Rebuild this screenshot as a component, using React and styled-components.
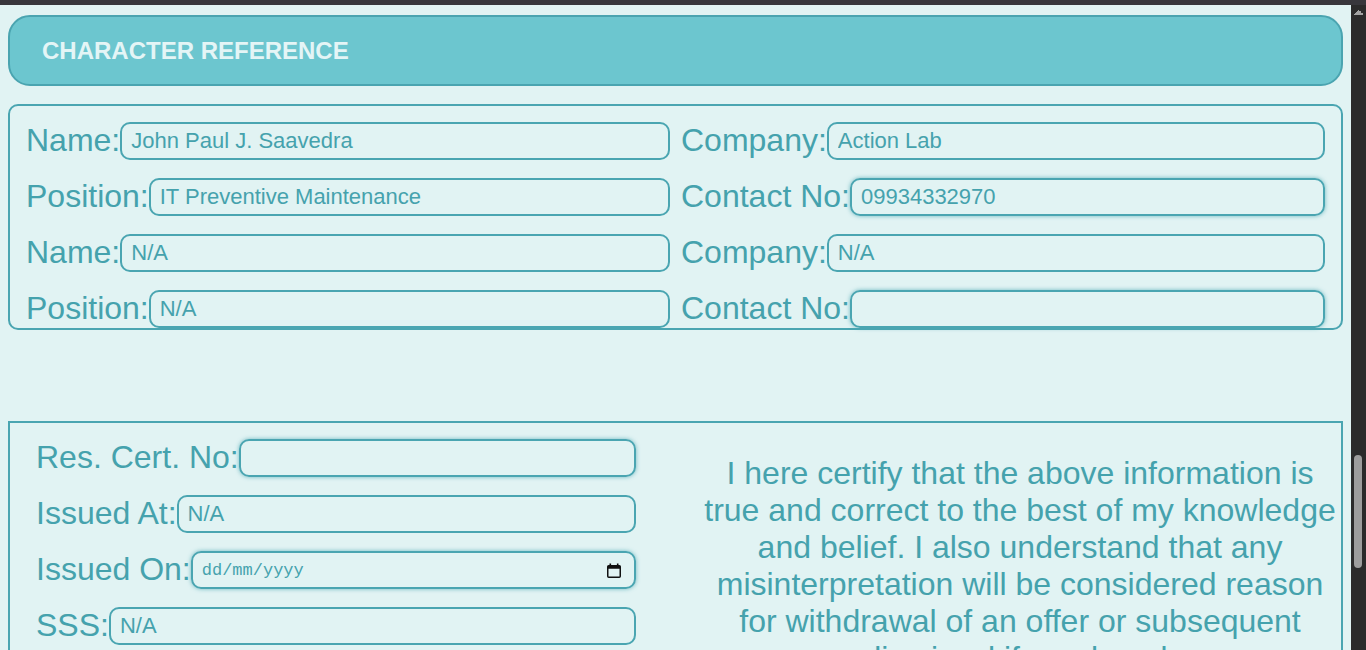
import React from "react";
import styled, { createGlobalStyle } from "styled-components";

const TEAL = "#45a2ad";
const LINE = "#4aa5b1";
const PAGE_BG = "#e1f3f3";

const GlobalStyle = createGlobalStyle`
  html, body {
    margin: 0;
    padding: 0;
    height: 100%;
    overflow: hidden;
    background: ${PAGE_BG};
    font-family: "Liberation Sans", Arial, sans-serif;
  }
`;

const characterRefs = [
  { label: "Name:", value: "John Paul J. Saavedra" },
  { label: "Company:", value: "Action Lab" },
  { label: "Position:", value: "IT Preventive Maintenance" },
  { label: "Contact No:", value: "09934332970", glow: true },
  { label: "Name:", value: "N/A" },
  { label: "Company:", value: "N/A" },
  { label: "Position:", value: "N/A" },
  { label: "Contact No:", value: "", glow: true },
];

const idFields = [
  { label: "Res. Cert. No:", value: "", glow: true },
  { label: "Issued At:", value: "N/A" },
  { label: "Issued On:", date: true },
  { label: "SSS:", value: "N/A" },
  { label: "TIN:", value: "N/A" },
];

const CalendarIcon = () => (
  <svg width="16" height="17" viewBox="0 0 16 17">
    <rect x="1.75" y="3.75" width="12.5" height="11.5" rx="1" fill="none" stroke="#111" strokeWidth="1.5" />
    <rect x="1.75" y="3.75" width="12.5" height="3" fill="#111" />
    <rect x="3.5" y="1.5" width="1.6" height="3" fill="#111" />
    <rect x="10.9" y="1.5" width="1.6" height="3" fill="#111" />
  </svg>
);

const Field = ({ label, value, glow, date }) => (
  <FieldRow>
    <Label>{label}</Label>
    {date ? (
      <DateBox>
        <DateInput type="text" placeholder="dd/mm/yyyy" />
        <CalendarIcon />
      </DateBox>
    ) : (
      <Input type="text" defaultValue={value} $glow={glow} />
    )}
  </FieldRow>
);

const App = () => (
  <>
    <GlobalStyle />
    <TopStrip />
    <Frame>
      <Viewport>
        <SectionHeader>
          <HeaderTitle>CHARACTER REFERENCE</HeaderTitle>
        </SectionHeader>
        <RefBox>
          {characterRefs.map((f, i) => (
            <Field key={i} {...f} />
          ))}
        </RefBox>
        <CertBox>
          <IdColumn>
            {idFields.map((f, i) => (
              <Field key={i} {...f} />
            ))}
          </IdColumn>
          <Statement>
            I here certify that the above information is true and correct to the best of my knowledge
            and belief. I also understand that any misinterpretation will be considered reason for
            withdrawal of an offer or subsequent dismissal if employed.
          </Statement>
        </CertBox>
      </Viewport>
      <ScrollRail>
        <ScrollArrow />
        <ScrollThumb />
      </ScrollRail>
    </Frame>
  </>
);

const TopStrip = styled.div`
  height: 5px;
  background: #38373c;
`;

const Frame = styled.div`
  display: flex;
  height: calc(100vh - 5px);
`;

const Viewport = styled.main`
  flex: 1;
  min-width: 0;
  overflow: hidden;
  padding: 10px 8px 0;
  color: ${TEAL};
`;

const ScrollRail = styled.div`
  display: flex;
  flex-direction: column;
  width: 15px;
  flex-shrink: 0;
  background: #2b2b2b;
`;

const ScrollArrow = styled.div`
  height: 15px;
  background:
    linear-gradient(to bottom right, transparent 50%, #a3a3a3 50%) 3px 5px / 5px 5px no-repeat,
    linear-gradient(to bottom left, transparent 50%, #a3a3a3 50%) 8px 5px / 5px 5px no-repeat;
`;

const ScrollThumb = styled.div`
  width: 8px;
  height: 113px;
  margin: 435px 0 0 3px;
  border-radius: 4px;
  background: #9d9d9d;
`;

const SectionHeader = styled.div`
  display: flex;
  align-items: center;
  box-sizing: border-box;
  height: 71px;
  padding-left: 32px;
  background: #6cc6cf;
  border: 2px solid #4aa4b0;
  border-radius: 22px;
`;

const HeaderTitle = styled.h2`
  margin: 0;
  font-size: 24px;
  font-weight: bold;
  color: #e4f5f6;
`;

const RefBox = styled.div`
  display: grid;
  grid-template-columns: 1fr 1fr;
  column-gap: 11px;
  row-gap: 18px;
  margin-top: 18px;
  padding: 16px 16px 0;
  border: 2px solid ${LINE};
  border-radius: 10px;
`;

const CertBox = styled.div`
  display: grid;
  grid-template-columns: 600px 1fr;
  margin-top: 91px;
  padding: 16px 0 18px 26px;
  border: 2px solid ${LINE};
`;

const IdColumn = styled.div`
  display: flex;
  flex-direction: column;
  gap: 18px;
`;

const FieldRow = styled.div`
  display: flex;
  align-items: center;
  min-width: 0;
`;

const Label = styled.label`
  padding-bottom: 3px;
  font-size: 32px;
  line-height: 32px;
  white-space: nowrap;
  color: ${TEAL};
`;

const Input = styled.input`
  flex: 1;
  min-width: 0;
  box-sizing: border-box;
  height: 38px;
  padding: 0 9px;
  font-family: "Liberation Sans", Arial, sans-serif;
  font-size: 22px;
  color: ${TEAL};
  background: transparent;
  border: 2px solid ${LINE};
  border-radius: 10px;
  outline: none;
  box-shadow: ${(p) => (p.$glow ? "0 0 4px rgba(74, 165, 177, 0.75)" : "none")};
`;

const DateBox = styled.div`
  flex: 1;
  display: flex;
  align-items: center;
  box-sizing: border-box;
  height: 38px;
  padding-right: 12px;
  border: 2px solid ${LINE};
  border-radius: 10px;
  box-shadow: 0 0 4px rgba(74, 165, 177, 0.75);
`;

const DateInput = styled.input`
  flex: 1;
  min-width: 0;
  padding: 0 0 0 9px;
  font-family: "Liberation Mono", "DejaVu Sans Mono", monospace;
  font-size: 17px;
  color: ${TEAL};
  background: transparent;
  border: none;
  outline: none;

  &::placeholder {
    color: ${TEAL};
  }
`;

const Statement = styled.p`
  margin: 0;
  padding: 16px 1px 0 64px;
  font-size: 32px;
  line-height: 37px;
  text-align: center;
  color: ${TEAL};
`;

export default App;
